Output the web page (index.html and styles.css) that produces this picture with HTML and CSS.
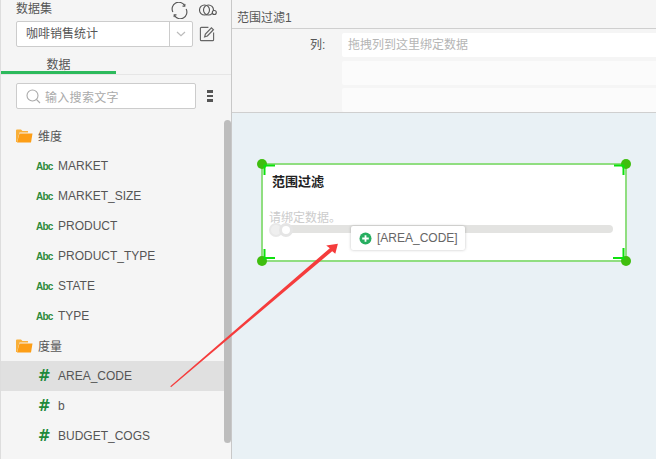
FILE: index.html
```html
<!DOCTYPE html>
<html lang="zh">
<head>
<meta charset="utf-8">
<title>范围过滤</title>
<link rel="stylesheet" href="styles.css">
</head>
<body>
<div class="app">
  <aside class="side">
    <div class="ds-head">
      <span class="ds-title">数据集</span>
      <span class="ds-tools">
        <svg width="17" height="17" viewBox="0 0 18 18" fill="none" stroke="#555" stroke-width="1.2"><path d="M2 10.500A7 7 0 0 1 14.400 4"/><path d="M16 7.500A7 7 0 0 1 3.600 14"/><path d="M12.200 4.400l2.400.1.100-2.500M5.800 13.600l-2.400-.1-.1 2.500"/></svg>
        <svg class="link" width="18" height="12" viewBox="0 0 18 12" fill="none" stroke="#555" stroke-width="1.100"><circle cx="5.500" cy="6" r="5"/><circle cx="9.500" cy="6" r="5"/><circle cx="15.300" cy="8.500" r="2" fill="#f5f5f5"/></svg>
      </span>
    </div>
    <div class="ds-row">
      <div class="select"><span class="select-text">咖啡销售统计</span><span class="select-arrow"><svg width="10" height="6" viewBox="0 0 10 6" fill="none" stroke="#bbb" stroke-width="1.200"><path d="M1 1l4 3.600L9 1"/></svg></span></div>
      <svg class="edit" width="16" height="16" viewBox="0 0 17 17" fill="none" stroke="#666" stroke-width="1.200"><path d="M10 1.500H2.500a1 1 0 0 0-1 1v12a1 1 0 0 0 1 1h12a1 1 0 0 0 1-1V7"/><path d="M6 11.500l.8-3 6.400-6.600 2.100 2.100-6.400 6.600z" stroke-width="1.300"/></svg>
    </div>
    <div class="tabs"><span class="tab">数据</span></div>
    <div class="search-row">
      <div class="search">
        <svg width="15" height="15" viewBox="0 0 15 15" fill="none" stroke="#aaa" stroke-width="1.100"><circle cx="6.500" cy="6.500" r="5.500"/><path d="M10.500 10.500l3.500 3.500"/></svg>
        <span class="search-text">输入搜索文字</span>
      </div>
      <span class="menu"><i></i><i></i><i></i></span>
    </div>
    <div class="tree">
      <div class="scrollbar"></div>
      <div class="folder"><svg width="17" height="14" viewBox="0 0 17 14"><path d="M0 13V1.500A1 1 0 0 1 1 .5h4l1.500 1.500H12v1.500H3.500L1 13z" fill="#f9b03a"/><path d="M3.500 4.500H16.500L15 13.500H1z" fill="#fd9e16"/></svg><span class="folder-name">维度</span></div>
      <div class="item"><span class="abc">Abc</span><span>MARKET</span></div>
      <div class="item"><span class="abc">Abc</span><span>MARKET_SIZE</span></div>
      <div class="item"><span class="abc">Abc</span><span>PRODUCT</span></div>
      <div class="item"><span class="abc">Abc</span><span>PRODUCT_TYPE</span></div>
      <div class="item"><span class="abc">Abc</span><span>STATE</span></div>
      <div class="item"><span class="abc">Abc</span><span>TYPE</span></div>
      <div class="folder"><svg width="17" height="14" viewBox="0 0 17 14"><path d="M0 13V1.500A1 1 0 0 1 1 .5h4l1.500 1.500H12v1.500H3.500L1 13z" fill="#f9b03a"/><path d="M3.500 4.500H16.500L15 13.500H1z" fill="#fd9e16"/></svg><span class="folder-name">度量</span></div>
      <div class="item active"><span class="hash">#</span><span>AREA_CODE</span></div>
      <div class="item"><span class="hash">#</span><span>b</span></div>
      <div class="item"><span class="hash">#</span><span>BUDGET_COGS</span></div>
    </div>
  </aside>
  <main class="main">
    <div class="title-bar">范围过滤1</div>
    <div class="form">
      <div class="form-row"><span class="form-label">列:</span><div class="slot first">拖拽列到这里绑定数据</div></div>
      <div class="form-row"><span class="form-label"></span><div class="slot"></div></div>
      <div class="form-row last"><span class="form-label"></span><div class="slot"></div></div>
    </div>
    <div class="canvas">
      <div class="widget">
        <div class="widget-title">范围过滤</div>
        <div class="widget-hint">请绑定数据。</div>
        <div class="track"></div>
        <div class="knob"></div>
        <div class="knob second"></div>
        <span class="handle tl"></span><span class="handle tr"></span><span class="handle bl"></span><span class="handle br"></span>
        <svg class="ticks" width="366" height="99" viewBox="0 0 366 99" fill="none" stroke="#0ee00e" stroke-width="2"><path d="M3.500 2v10M3 2.500h11M362.500 2v10M353 2.500h10M3.500 86v11M3 95h11M362.500 85v12M352 95h11"/></svg>
      </div>
    </div>
  </main>
</div>
<div class="drag-chip"><svg width="13" height="13" viewBox="0 0 13 13"><circle cx="6.500" cy="6.500" r="6" fill="#27ae60"/><path d="M6.500 3.200v6.600M3.200 6.500h6.600" stroke="#fff" stroke-width="1.800"/></svg><span>[AREA_CODE]</span></div>
<svg class="arrow" width="656" height="459" viewBox="0 0 656 459"><path d="M170.300 386.300L329.800 248.200 326.200 245.600 337.900 243.700 335.300 253.800 332.200 251.200 171 387.200z" fill="#f53c3c"/></svg>
</body>
</html>
```

FILE: styles.css
```css
* { box-sizing: border-box; }
html, body { margin: 0; padding: 0; height: 100%; overflow: hidden; }
body { position: relative; font-family: "Liberation Sans", "Noto Sans CJK SC", sans-serif; font-size: 12px; color: #555; background: #f5f5f5; }
.app { display: flex; width: 656px; height: 459px; }

.side { width: 232px; flex: none; display: flex; flex-direction: column; background: #f5f5f5; border-left: 1px solid #ddd; border-right: 1px solid #c8c8c8; }
.ds-head { display: flex; align-items: center; justify-content: space-between; height: 18px; padding: 0 14px 0 15px; }
.ds-title { color: #555; line-height: 18px; }
.ds-tools { display: flex; align-items: center; gap: 11px; margin-top: 2px; }
.ds-row { display: flex; align-items: center; gap: 6px; padding-left: 15px; margin-top: 3px; }
.select { width: 177px; height: 26px; display: flex; background: #fff; border: 1px solid #ccc; border-radius: 2px; }
.select-text { flex: 1; padding-left: 9px; line-height: 24px; color: #555; }
.select-arrow { width: 23px; display: flex; align-items: center; justify-content: center; border-left: 1px solid #ccc; }
.tabs { height: 28px; border-bottom: 1px solid #e6e6e6; }
.tab { display: block; width: 115px; height: 27px; padding-top: 10px; text-align: center; line-height: 16px; color: #555; border-bottom: 3px solid #2dba5c; }
.search-row { display: flex; align-items: center; padding-left: 15px; margin-top: 8px; }
.search { width: 180px; height: 26px; display: flex; align-items: center; gap: 4px; padding-left: 9px; background: #fff; border: 1px solid #ccc; border-radius: 2px; }
.search-text { color: #aaa; letter-spacing: .3px; }
.menu { display: flex; flex-direction: column; gap: 2px; margin-left: 11px; }
.menu i { display: block; width: 6px; height: 2.500px; background: #555; }

.tree { position: relative; flex: 1; margin-top: 12px; }
.scrollbar { position: absolute; right: 0; top: -1px; width: 7px; height: 323px; background: #bdbdbd; border-radius: 4px; }
.folder { display: flex; align-items: center; height: 30px; padding-left: 15px; gap: 5px; color: #555; }
.folder-name { margin-bottom: 2px; }
.item { display: flex; align-items: center; height: 30px; width: 223px; color: #555; }
.item.active { background: #e0e0e0; }
.abc { width: 57px; padding-left: 35px; flex: none; color: #2c8a3c; font-size: 10px; font-weight: 700; letter-spacing: -.8px; }
.hash { width: 57px; padding-left: 37px; flex: none; color: #1f8a3c; font-family: "DejaVu Sans", sans-serif; font-size: 15px; font-weight: 700; line-height: 18px; }

.main { flex: 1; display: flex; flex-direction: column; min-width: 0; }
.title-bar { height: 29px; padding: 10px 0 0 5px; line-height: 17px; color: #555; background: #f5f5f5; border-bottom: 1px solid #cfcfcf; }
.form { display: flex; flex-direction: column; gap: 4px; height: 84px; padding-top: 4px; background: #f5f5f5; border-bottom: 1px solid #cfcfcf; }
.form-row { display: flex; height: 24px; flex: none; }
.form-row.last { margin-top: -1px; }
.form-label { width: 110px; flex: none; padding: 0 0 0 78px; line-height: 25px; color: #555; }
.slot { flex: 1; background: #fbfbfb; border-radius: 2px 0 0 2px; line-height: 25px; padding-left: 6px; color: #b5b5b5; }
.slot.first { background: #fff; }

.canvas { position: relative; flex: 1; background: #e9f1f5; }
.widget { position: absolute; left: 29px; top: 50px; width: 366px; height: 99px; background: #fff; border: 2px solid #90de80; }
.widget-title { padding: 8px 0 0 9px; font-weight: 700; font-size: 13px; line-height: 18px; color: #222; }
.widget-hint { padding: 19px 0 0 6px; line-height: 16px; color: #ccc; }
.track { position: absolute; left: 10px; top: 60px; width: 340px; height: 8px; background: #e3e3e1; border-radius: 4px; }
.knob { position: absolute; left: 6px; top: 58px; width: 14px; height: 14px; border-radius: 50%; background: #efefef; border: 2px solid #e8e8e8; }
.knob.second { left: 16px; background: #fff; border: 3px solid #e5e5e5; }
.handle { position: absolute; width: 10px; height: 10px; border-radius: 50%; background: #3fbe0e; }
.tl { left: -6px; top: -6px; }
.tr { right: -6px; top: -6px; }
.bl { left: -6px; bottom: -6px; }
.br { right: -6px; bottom: -6px; }
.ticks { position: absolute; left: -2px; top: -2px; }

.drag-chip { position: absolute; left: 351px; top: 226px; width: 114px; height: 24px; display: flex; align-items: center; gap: 5px; padding-left: 8px; background: #fff; border-radius: 2px; box-shadow: 0 0 3px rgba(0,0,0,.25); color: #666; }
.arrow { position: absolute; left: 0; top: 0; pointer-events: none; }
```
